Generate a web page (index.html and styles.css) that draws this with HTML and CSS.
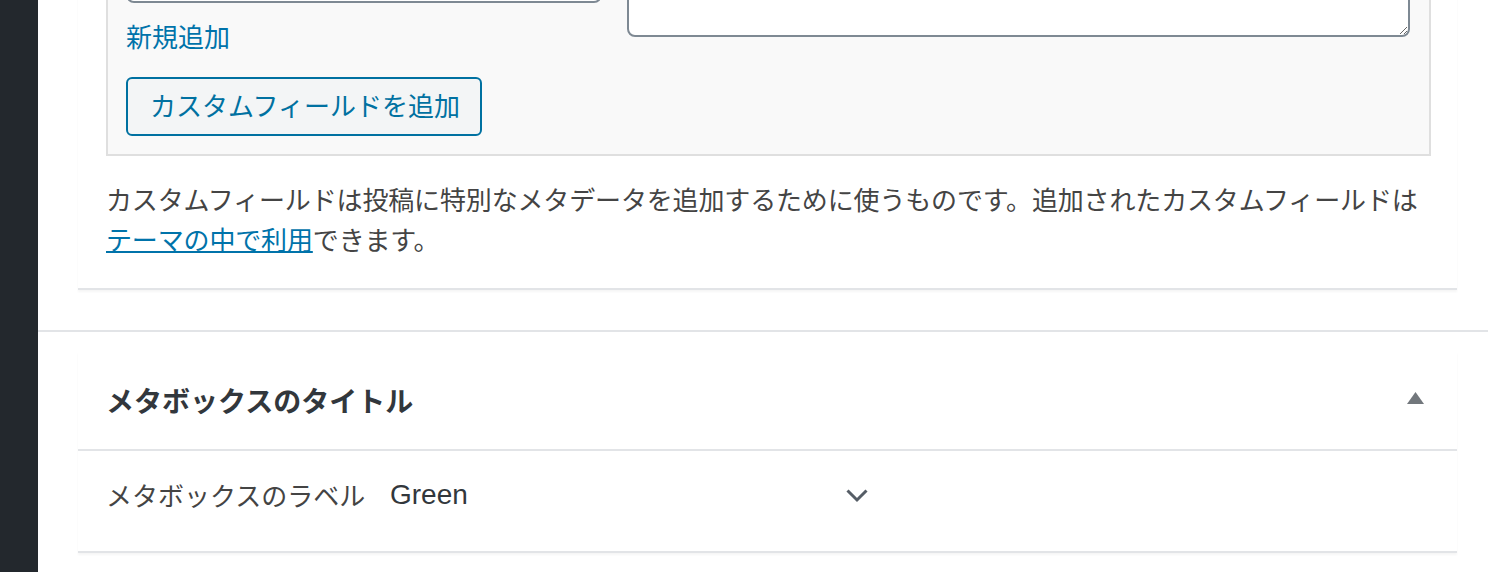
FILE: index.html
```html
<!DOCTYPE html>
<html lang="ja">
<head>
<meta charset="utf-8">
<title>カスタムフィールド</title>
<link rel="stylesheet" href="styles.css">
</head>
<body>
<div class="app">
  <aside class="sidebar"></aside>
  <main class="main">
    <section class="postbox postbox-custom">
      <div class="customfields">
        <div class="cf-col">
          <input class="cf-input" type="text" value="">
          <a class="cf-new" href="#">新規追加</a>
          <button class="cf-button" type="button">カスタムフィールドを追加</button>
        </div>
        <div class="cf-col">
          <textarea class="cf-textarea"></textarea>
        </div>
      </div>
      <p class="desc">カスタムフィールドは投稿に特別なメタデータを追加するために使うものです。追加されたカスタムフィールドは<a class="desc-link" href="#">テーマの中で利用</a>できます。</p>
    </section>

    <div class="metaboxes">
      <section class="postbox">
        <div class="postbox-header">
          <h2 class="postbox-title">メタボックスのタイトル</h2>
          <svg class="toggle-icon" width="17" height="12" viewBox="0 0 17 12" aria-hidden="true"><polygon points="8.5,0 17,12 0,12"/></svg>
        </div>
        <div class="postbox-row">
          <span class="row-label">メタボックスのラベル</span>
          <span class="select">
            <span class="select-value">Green</span>
            <svg class="chevron" width="22" height="14" viewBox="0 0 22 14" aria-hidden="true"><polyline points="1.5,1.5 11,11 20.5,1.5"/></svg>
          </span>
        </div>
      </section>
    </div>
  </main>
</div>
</body>
</html>
```

FILE: styles.css
```css
html, body {
  margin: 0;
  padding: 0;
  height: 100%;
  background: #ffffff;
  overflow: hidden;
}

body {
  font-family: "Liberation Sans", "Noto Sans CJK JP", sans-serif;
  color: #444444;
}

.app {
  display: flex;
  height: 572px;
}

.sidebar {
  width: 38px;
  flex: 0 0 38px;
  background: #23282d;
}

.main {
  flex: 1;
  display: flex;
  flex-direction: column;
}

.postbox {
  margin: 0 31px 0 40px;
  padding: 0 26px 0 28px;
  background: #ffffff;
  border-bottom: 2px solid #e2e4e7;
  box-shadow: 0 2px 2px rgba(0, 0, 0, 0.04);
}

.postbox-custom {
  margin-top: -80px;
}

.customfields {
  display: grid;
  grid-template-columns: 476px 1fr;
  column-gap: 25px;
  align-items: start;
  padding: 21px 19px 18px 18px;
  background: #f9f9f9;
  border: 2px solid #dfdfdf;
}

.cf-col {
  display: flex;
  flex-direction: column;
  align-items: flex-start;
}

.cf-input {
  box-sizing: border-box;
  width: 100%;
  height: 60px;
  margin: 0;
  border: 2px solid #7e8993;
  border-radius: 8px;
  background: #ffffff;
}

.cf-new {
  margin-top: 13px;
  font-family: "Noto Sans CJK JP", sans-serif;
  font-size: 26px;
  line-height: 40px;
  color: #0073aa;
  text-decoration: none;
}

.cf-button {
  box-sizing: border-box;
  margin-top: 21px;
  height: 59px;
  padding: 0 20px 3px 22px;
  font-family: "Noto Sans CJK JP", sans-serif;
  font-size: 26px;
  line-height: 1;
  color: #0071a1;
  background: #f3f5f6;
  border: 2px solid #0071a1;
  border-radius: 6px;
}

.cf-textarea {
  box-sizing: border-box;
  display: block;
  width: 100%;
  height: 94px;
  margin: 0;
  border: 2px solid #7e8993;
  border-radius: 8px;
  background: #ffffff;
}

.desc {
  margin: 23px 0 0 0;
  padding-bottom: 29px;
  font-family: "Noto Sans CJK JP", sans-serif;
  font-size: 26px;
  line-height: 40px;
  letter-spacing: -0.15px;
  color: #444444;
}

.desc-link {
  color: #0073aa;
  text-decoration: underline;
  text-decoration-thickness: 2px;
}

.metaboxes {
  margin-top: 40px;
  padding-top: 20px;
  border-top: 2px solid #e2e4e7;
}

.metaboxes .postbox {
  padding: 0;
  border-bottom: 0;
}

.postbox-header {
  display: flex;
  align-items: center;
  justify-content: space-between;
  height: 97px;
  padding: 0 33px 0 28px;
  border-bottom: 2px solid #e2e4e7;
}

.postbox-title {
  margin: 0 0 2px 0;
  font-family: "Noto Sans CJK JP", sans-serif;
  font-size: 28px;
  font-weight: 700;
  line-height: 40px;
  color: #32373c;
}

.toggle-icon {
  display: block;
  margin-bottom: 5px;
  fill: #72777c;
}

.postbox-row {
  display: flex;
  align-items: center;
  height: 102px;
  box-sizing: border-box;
  padding: 0 0 12px 28px;
  border-bottom: 2px solid #e2e4e7;
}

.row-label {
  width: 260px;
  margin-right: 8px;
  font-family: "Noto Sans CJK JP", sans-serif;
  font-size: 26px;
  line-height: 40px;
  white-space: nowrap;
  color: #444444;
}

.select {
  box-sizing: border-box;
  display: flex;
  align-items: center;
  justify-content: space-between;
  width: 510px;
  padding: 0 16px;
}

.select-value {
  font-family: "Liberation Sans", sans-serif;
  font-size: 28px;
  line-height: 40px;
  color: #32373c;
}

.chevron {
  display: block;
  margin-top: 2px;
  fill: none;
  stroke: #555d66;
  stroke-width: 3;
}
```
